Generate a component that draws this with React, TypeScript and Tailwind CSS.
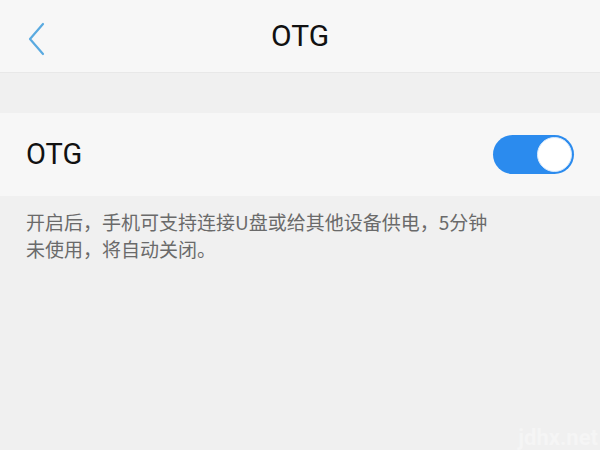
import { useState } from 'react';

const OtgSettings = () => {
  const [enabled, setEnabled] = useState(true);

  return (
    <div
      className="relative flex flex-col w-[600px] h-[450px] bg-[#f0f0f0] overflow-hidden"
      style={{ fontFamily: 'Roboto, "Noto Sans CJK SC", sans-serif' }}>
      {/* top bar */}
      <div className="relative flex items-center justify-center h-[73px] bg-[#f7f7f7] border-b border-[#e8e8e8]">
        <button className="absolute left-[22px] top-[17px] p-1">
          <svg width="22" height="38" viewBox="0 0 22 38" fill="none">
            <path d="M17 3 L4 18 L17 33" stroke="#5aaae0" strokeWidth="2.2" strokeLinecap="round" strokeLinejoin="round" />
          </svg>
        </button>
        <h1 className="text-[30px] leading-none text-[#111]">OTG</h1>
      </div>

      <div className="h-[40px]" />

      {/* switch row */}
      <div className="flex items-center justify-between h-[83px] pl-[26px] pr-[26px] bg-[#f7f7f7]">
        <span className="text-[29px] leading-none text-[#111]">OTG</span>
        <button
          onClick={() => setEnabled(!enabled)}
          className={`relative flex items-center w-[81px] h-[39px] rounded-full ${enabled ? 'bg-[#2b8bee]' : 'bg-[#cccccc]'}`}>
          <span
            className={`absolute top-[2px] w-[35px] h-[35px] rounded-full bg-white border border-[#d6e8fb] ${enabled ? 'right-[2px]' : 'left-[2px]'}`}
          />
        </button>
      </div>

      <p
        className="pl-[26px] pt-[12px] text-[19px] leading-[27px] text-[#6a6a6a]"
        style={{ fontFamily: '"Noto Sans CJK SC", Roboto, sans-serif' }}>
        开启后，手机可支持连接U盘或给其他设备供电，5分钟
        <br />
        未使用，将自动关闭。
      </p>

      <span className="absolute right-[2px] bottom-[-4px] text-[22px] font-bold text-[#f5f5f5]">jdhx.net</span>
    </div>
  );
};

export default function App() {
  return <OtgSettings />;
}
